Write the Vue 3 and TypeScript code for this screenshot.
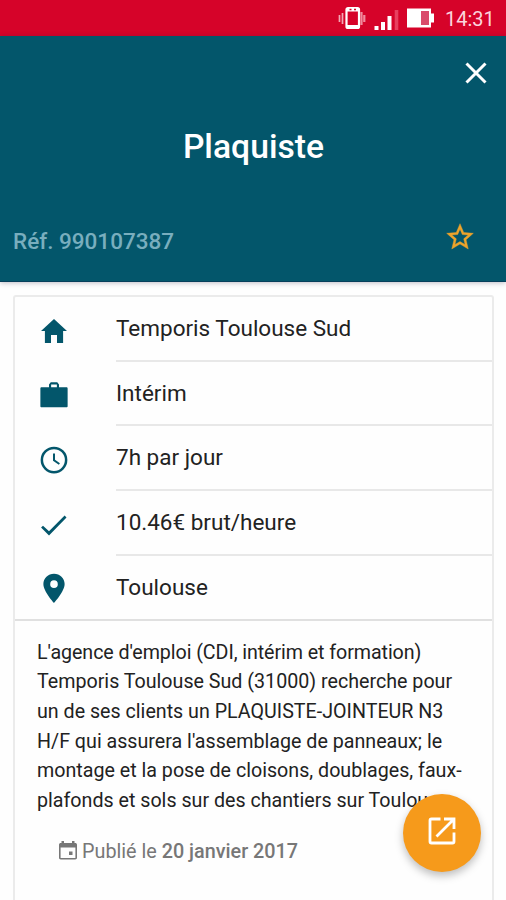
<script setup lang="ts">
interface Detail {
  label: string
  icon: string
}

const details: Detail[] = [
  {
    label: 'Temporis Toulouse Sud',
    icon: 'M208 448V320h96v128h97.6V256H464L256 64 48 256h62.4v192z',
  },
  {
    label: 'Intérim',
    icon: 'M336 116V70l-28-34H204l-28 34v46H56c-10 0-18 8-18 18v284c0 10 8 18 18 18h400c10 0 18-8 18-18V134c0-10-8-18-18-18H336zm-126 0V70h92v46h-92z',
  },
  {
    label: '7h par jour',
    icon: 'M256 42a214 214 0 1 0 0 428 214 214 0 0 0 0-428zm0 388a174 174 0 1 1 0-348 174 174 0 0 1 0 348zM240 150v118l93 65 18-25-79-58V150z',
  },
  {
    label: '10.46€ brut/heure',
    icon: 'M176 355L80 266l-31 31 127 127 280-290-30-29z',
  },
  {
    label: 'Toulouse',
    icon: 'M256-6C163-6 86 68 86 160c0 118 170 304 170 304s170-186 170-304C426 68 349-6 256-6zm0 229a61 61 0 1 1 0-122 61 61 0 0 1 0 122z',
  },
]

const description: string[] = [
  "L'agence d'emploi (CDI, intérim et formation)",
  'Temporis Toulouse Sud (31000) recherche pour',
  'un de ses clients un PLAQUISTE-JOINTEUR N3',
  "H/F qui assurera l'assemblage de panneaux; le",
  'montage et la pose de cloisons, doublages, faux-',
  'plafonds et sols sur des chantiers sur Toulouse',
]
</script>

<template>
  <div class="screen">
    <div class="status">
      <svg class="vibrate" viewBox="0 0 28 24" width="28" height="24">
        <path d="M1.5 9v7M4.5 7v11" stroke="#f3a9b5" stroke-width="1.7" />
        <path d="M23.5 6v13M26.3 9v7" stroke="#f08a9c" stroke-width="2.2" />
        <rect x="8.5" y="2" width="12.5" height="20" rx="1.5" fill="none" stroke="#fff" stroke-width="2.2" />
        <path d="M8 4h13M8 20.5h13" stroke="#fff" stroke-width="3" />
        <path d="M11.5 3.5h2M16 3.5h2" stroke="#d60329" stroke-width="1.4" />
      </svg>
      <svg class="signal" viewBox="0 0 25 22" width="25" height="22">
        <path d="M2.5 17v4M9 13v8M15.5 7v14" stroke="#fff" stroke-width="4" />
        <path d="M22.5 1v20" stroke="#e8405f" stroke-width="3.6" />
      </svg>
      <svg class="battery" viewBox="0 0 29 20" width="29" height="20">
        <path d="M1 0.5h24v5h3v9h-3v5H1z" fill="#fff" />
        <path d="M15 3h8v14h-8z" fill="#d94b6b" />
      </svg>
      <span class="time">14:31</span>
    </div>

    <header class="header">
      <button class="close" aria-label="Fermer">
        <svg viewBox="0 0 22 22" width="22" height="22">
          <path d="M1.5 1.5l19 19M20.5 1.5l-19 19" stroke="#fff" stroke-width="3" />
        </svg>
      </button>
      <h1 class="title">Plaquiste</h1>
      <div class="meta">
        <span class="ref">Réf. 990107387</span>
        <svg class="star" viewBox="0 0 24 24" width="32" height="32">
          <path fill="#eda32b" stroke="#eda32b" stroke-width="0.3" d="M22 9.24l-7.19-.62L12 2 9.19 8.63 2 9.24l5.46 4.73L5.82 21 12 17.27 18.18 21l-1.63-7.03L22 9.24zM12 15.4l-3.76 2.27 1-4.28-3.32-2.88 4.38-.38L12 6.1l1.71 4.04 4.38.38-3.32 2.88 1 4.28L12 15.4z" />
        </svg>
      </div>
    </header>

    <main class="card">
      <ul class="details">
        <li v-for="item in details" :key="item.label" class="row">
          <svg class="icon" viewBox="0 0 512 512" width="32" height="32">
            <path :d="item.icon" fill-rule="evenodd" />
          </svg>
          <span class="label">{{ item.label }}</span>
        </li>
      </ul>
      <p class="description">
        <span v-for="line in description" :key="line" class="line">{{ line }}</span>
      </p>
      <div class="published">
        <svg viewBox="0 0 20 20" width="20" height="20">
          <path fill="#777" fill-rule="evenodd" d="M3.5 0h2.5v2h8V0h2.500v2h.7c1 0 1.8.7 1.8 1.7v13.1c0 1-.8 1.7-1.8 1.7H2.800c-1 0-1.800-.7-1.800-1.700V3.700C1 2.700 1.800 2 2.800 2h.7zM2.600 6.500v10.400h14.800V6.500zM11 10.500h3.500v3.500H11z" />
        </svg>
        <span class="date">Publié le <b>20 janvier 2017</b></span>
      </div>
    </main>

    <button class="fab" aria-label="Ouvrir">
      <svg viewBox="0 0 28 28" width="28" height="28">
        <path d="M12.5 2H3.5Q2 2 2 3.5V24.5Q2 26 3.5 26H24.5Q26 26 26 24.5V15.500" fill="none" stroke="#fff" stroke-width="2.8" />
        <path d="M16 2h10v10M25.500 2.500L8.500 19.500" fill="none" stroke="#fff" stroke-width="2.8" />
      </svg>
    </button>
  </div>
</template>

<style>
body {
  margin: 0;
  background: #fefefe;
}
</style>

<style scoped>
.screen {
  position: relative;
  box-sizing: border-box;
  width: 506px;
  height: 900px;
  overflow: hidden;
  background: #fefefe;
  font-family: Roboto, 'Liberation Sans', sans-serif;
  color: #222;
}

button {
  padding: 0;
  border: 0;
  background: none;
}

svg {
  display: block;
  flex: none;
}

.status {
  display: flex;
  align-items: center;
  justify-content: flex-end;
  box-sizing: border-box;
  height: 36px;
  padding: 0 11px 0 0;
  background: #d60329;
}

.vibrate {
  margin-right: 8px;
}

.signal {
  margin: 4px 7px 0 0;
}

.battery {
  margin-right: 10px;
}

.time {
  width: 50px;
  padding-top: 2px;
  color: #fbd5dc;
  font-size: 20px;
  line-height: 34px;
  white-space: nowrap;
}

.header {
  display: flex;
  flex-direction: column;
  box-sizing: border-box;
  height: 246px;
  padding: 26px 19px 0 13px;
  background: #03566b;
  border-bottom: 1px solid #063f5b;
  box-shadow: 0 1px 5px rgba(30, 20, 50, 0.28);
}

.close {
  align-self: flex-end;
  width: 22px;
  height: 22px;
}

.title {
  margin: 43px 0 0;
  padding-left: 7px;
  color: #fff;
  font-size: 33.7px;
  font-weight: 500;
  line-height: 40px;
  text-align: center;
}

.meta {
  display: flex;
  align-items: center;
  justify-content: space-between;
  margin-top: 50px;
  padding-right: 11px;
  height: 40px;
}

.ref {
  padding-top: 8px;
  color: #79aebe;
  font-size: 22.5px;
  font-weight: 500;
}

.card {
  display: flex;
  flex-direction: column;
  box-sizing: border-box;
  width: 481px;
  height: 640px;
  margin: 13px 0 0 13px;
  border: 2px solid #ebebeb;
  border-radius: 3px;
  background: #fefefe;
}

.details {
  margin: 0;
  padding: 0;
  list-style: none;
  border-bottom: 2px solid #e0e0e0;
}

.row {
  display: flex;
  align-items: stretch;
  height: 64.7px;
}

.row:last-child {
  height: 63px;
}

.icon {
  margin: 18px 46px 0 23px;
  overflow: visible;
  fill: #03566b;
}

.label {
  flex: 1;
  box-sizing: border-box;
  border-bottom: 2px solid #e8e8e8;
  font-size: 22.5px;
  line-height: 63.4px;
  white-space: nowrap;
}

.row:last-child .label {
  border-bottom: 0;
}

.description {
  margin: 17px 0 0 22px;
  font-size: 19.66px;
  line-height: 29.6px;
}

.line {
  display: block;
  white-space: nowrap;
}

.line:first-child {
  letter-spacing: -0.07px;
}

.published {
  display: flex;
  align-items: center;
  gap: 4px;
  margin: 20px 0 0 43px;
  color: #777;
  font-size: 19.8px;
  line-height: 30px;
}

.date {
  padding-top: 2px;
  white-space: nowrap;
}

.date b {
  font-weight: 500;
}

.fab {
  position: absolute;
  right: 25px;
  bottom: 28px;
  display: flex;
  align-items: center;
  justify-content: center;
  box-sizing: border-box;
  width: 78px;
  height: 78px;
  padding-bottom: 4px;
  border-radius: 50%;
  background: #f69a1b;
  box-shadow: 0 4px 8px rgba(0, 0, 0, 0.26);
}
</style>
